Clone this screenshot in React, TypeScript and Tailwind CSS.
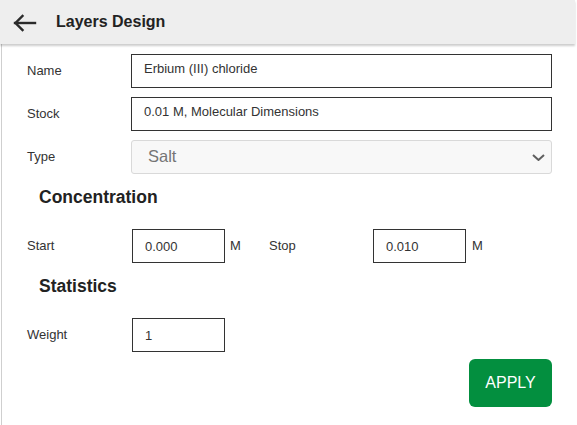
import React from 'react';

const font = { fontFamily: '"Liberation Sans", Arial, sans-serif' };

const BackArrow = () => (
  <svg width="24" height="18" viewBox="0 0 24 18" fill="none" stroke="#2b2b2b" strokeWidth="2.4" strokeLinecap="square">
    <path d="M2 9H22" />
    <path d="M9.5 2L2.5 9L9.5 16" />
  </svg>
);

const Chevron = () => (
  <svg width="13" height="7" viewBox="0 0 13 7" fill="none" stroke="#5f5f5f" strokeWidth="2">
    <path d="M1 1L6.5 6L12 1" />
  </svg>
);

const Field = ({ value, className = '' }: { value: string; className?: string }) => (
  <input
    readOnly
    value={value}
    className={`h-[34px] border border-[#333] bg-white px-3 text-[13px] text-[#333] outline-none ${className}`}
    style={font}
  />
);

export default function App() {
  return (
    <div className="w-[577px] h-[425px] bg-white overflow-hidden" style={font}>
      <div className="h-[44px] w-[575px] bg-[#eeeeee] flex items-center shadow-[0_2px_2px_rgba(0,0,0,0.2)] relative z-10">
        <div className="ml-[13px] mt-[1px]">
          <BackArrow />
        </div>
        <h1 className="ml-[19px] text-[16px] font-bold text-[#222]">Layers Design</h1>
      </div>

      <div className="ml-[1px] border-l border-[#cfcfcf] h-[381px] pl-[25px] pr-[25px] pt-[10px] text-[13px] text-[#333]">
        <div className="flex flex-col gap-[9px]">
          <div className="flex items-center">
            <label className="w-[104px]">Name</label>
            <Field value="Erbium (III) chloride" className="flex-1 pb-[5px]" />
          </div>
          <div className="flex items-center">
            <label className="w-[104px]">Stock</label>
            <Field value="0.01 M, Molecular Dimensions" className="flex-1 pb-[5px]" />
          </div>
          <div className="flex items-center">
            <label className="w-[104px]">Type</label>
            <div className="flex-1 h-[34px] rounded-[3px] border border-[#d9d9d9] bg-[#f8f8f8] flex items-center justify-between pl-4 pr-[6px]">
              <span className="text-[16.5px] text-[#757575] pb-[2px]">Salt</span>
              <Chevron />
            </div>
          </div>
        </div>

        <h2 className="ml-[12px] mt-[13px] text-[17.5px] font-bold text-[#222] leading-[21px]">Concentration</h2>

        <div className="mt-[21px] flex items-center">
          <label className="w-[105px]">Start</label>
          <Field value="0.000" className="w-[93px]" />
          <span className="ml-[5px] w-[39px]">M</span>
          <label className="w-[104px]">Stop</label>
          <Field value="0.010" className="w-[93px]" />
          <span className="ml-[6px]">M</span>
        </div>

        <h2 className="ml-[12px] mt-[13px] text-[17.5px] font-bold text-[#222] leading-[21px]">Statistics</h2>

        <div className="mt-[21px] flex items-center">
          <label className="w-[105px]">Weight</label>
          <Field value="1" className="w-[93px]" />
        </div>

        <div className="mt-[7px] flex justify-end">
          <button className="w-[83px] h-[48px] rounded-[6px] bg-[#038f3f] text-white text-[16px]">APPLY</button>
        </div>
      </div>
    </div>
  );
}
